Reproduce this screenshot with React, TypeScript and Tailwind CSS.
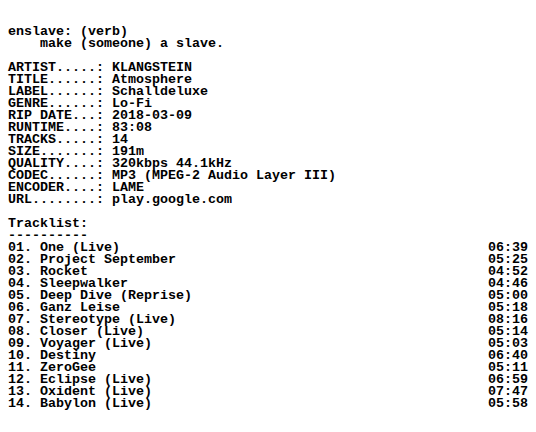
import React from "react";

const info: [string, string][] = [
  ["ARTIST", "KLANGSTEIN"],
  ["TITLE", "Atmosphere"],
  ["LABEL", "Schalldeluxe"],
  ["GENRE", "Lo-Fi"],
  ["RIP DATE", "2018-03-09"],
  ["RUNTIME", "83:08"],
  ["TRACKS", "14"],
  ["SIZE", "191m"],
  ["QUALITY", "320kbps 44.1kHz"],
  ["CODEC", "MP3 (MPEG-2 Audio Layer III)"],
  ["ENCODER", "LAME"],
  ["URL", "play.google.com"],
];

const tracks: [string, string][] = [
  ["One (Live)", "06:39"],
  ["Project September", "05:25"],
  ["Rocket", "04:52"],
  ["Sleepwalker", "04:46"],
  ["Deep Dive (Reprise)", "05:00"],
  ["Ganz Leise", "05:18"],
  ["Stereotype (Live)", "08:16"],
  ["Closer (Live)", "05:14"],
  ["Voyager (Live)", "05:03"],
  ["Destiny", "06:40"],
  ["ZeroGee", "05:11"],
  ["Eclipse (Live)", "06:59"],
  ["Oxident (Live)", "07:47"],
  ["Babylon (Live)", "05:58"],
];

const App = () => {
  return (
    <div className="w-[536px] h-[432px] bg-white text-black overflow-hidden pt-[26px] pl-2 font-['Liberation_Mono',monospace] font-bold text-[13.33px] leading-[12px] whitespace-pre">
      <div>enslave: (verb)</div>
      <div>    make (someone) a slave.</div>
      <div>&nbsp;</div>
      {info.map(([k, v]) => (
        <div key={k}>{(k + "").padEnd(11, ".") + ": " + v}</div>
      ))}
      <div>&nbsp;</div>
      <div>Tracklist:</div>
      <div>----------</div>
      {tracks.map(([t, d], i) => (
        <div key={t}>
          {(String(i + 1).padStart(2, "0") + ". " + t).padEnd(60, " ") + d}
        </div>
      ))}
    </div>
  );
};

export default App;
